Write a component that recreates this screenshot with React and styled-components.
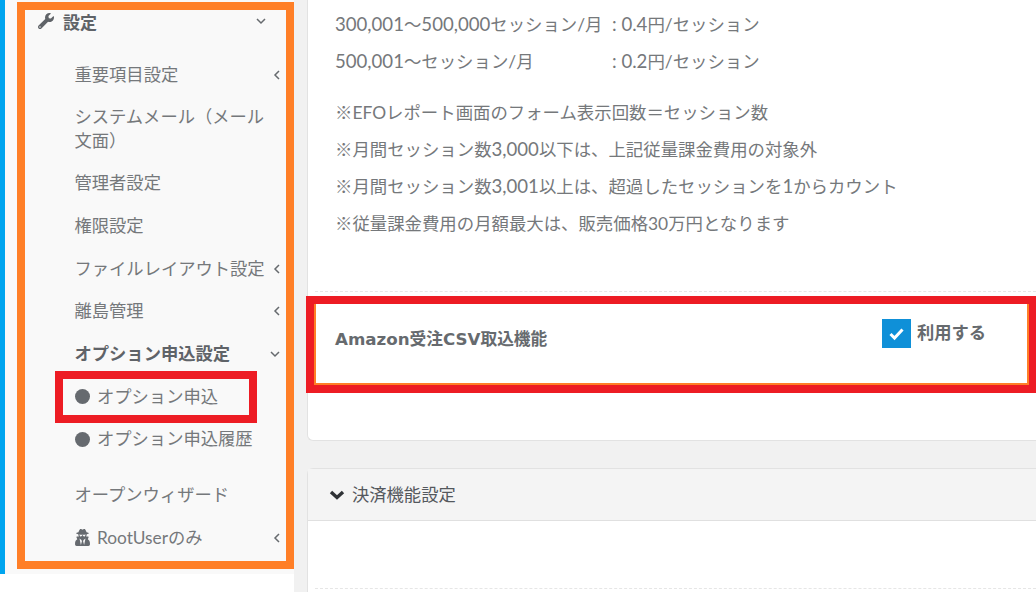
import React from 'react'
import styled, { createGlobalStyle } from 'styled-components'
import { FaWrench, FaUserSecret } from 'react-icons/fa'

const GlobalStyle = createGlobalStyle`
    html, body {
        margin: 0;
        padding: 0;
        height: 592px;
        overflow: hidden;
        background: #fff;
    }
    * {
        box-sizing: border-box;
    }
`

const Page = styled.div`
    display: flex;
    width: 1036px;
    height: 592px;
    overflow: hidden;
    font-family: Lato, "Noto Sans CJK JP", sans-serif;
    color: #6d7073;
    font-size: 17.4px;
`
const Sidebar = styled.aside`
    position: relative;
    flex: none;
    width: 294px;
    height: 574px;
    padding-left: 12px;
    background: #f9f9f9;
    border-left: 5px solid #00a5ef;
`
const OrangeFrame = styled.div`
    margin-top: 2px;
    width: 277px;
    height: 567px;
    border: 8px solid #ff7f27;
`
const SideHead = styled.div`
    display: flex;
    align-items: center;
    height: 26px;
    padding-left: 13px;
    margin-top: -2px;
    font-weight: 700;
    font-size: 17px;
    color: #5f6368;
    svg {
        margin-right: 9px;
    }
`
const Caret = styled.svg`
    flex: none;
    width: 10px;
    height: 10px;
    margin-left: auto;
    fill: none;
    stroke: #666a6e;
    stroke-width: 1.5;
    && {
        margin-right: ${p => p.$right}px;
    }
`
const Menu = styled.div`
    padding: 20px 0 0 49.5px;
`
const Item = styled.div`
    display: flex;
    align-items: center;
    padding: 9.35px 0;
    line-height: 24px;
    font-size: 17.3px;
    font-weight: ${p => (p.$bold ? 700 : 400)};
    color: ${p => (p.$bold ? '#5f6368' : '#75787b')};
    margin-bottom: ${p => p.$gap || 0}px;
`
const ItemText = styled.span`
    flex: 1;
    white-space: ${p => (p.$wrap ? 'normal' : 'nowrap')};
    padding-right: ${p => (p.$wrap ? '18px' : 0)};
`
const Dot = styled.i`
    flex: none;
    width: 15px;
    height: 15px;
    margin: 0 7px 0 .5px;
    border-radius: 50%;
    background: #666a6f;
`
const RootIcon = styled(FaUserSecret)`
    flex: none;
    width: 15px;
    height: 17px;
    margin: 0 7px 0 .5px;
    color: #666a6f;
`
const RedFrame = styled.div`
    position: absolute;
    left: 50px;
    top: 371px;
    width: 202px;
    height: 52px;
    border: 8px solid #ed1c24;
`
const Main = styled.main`
    flex: 1;
    min-width: 0;
    padding-left: 13px;
    background: #f1f1f1;
    height: 592px;
`
const TopCard = styled.section`
    position: relative;
    height: 441px;
    background: #fff;
    border: 1px solid #e2e2e2;
    border-top: 0;
    border-right: 0;
    border-bottom-left-radius: 6px;
`
const Notes = styled.div`
    height: 292px;
    margin-left: 7px;
    padding: 6px 0 0 20px;
    border-bottom: 1px dashed #e6e6e6;
`
const Line = styled.div`
    display: flex;
    height: 37px;
    line-height: 37px;
    white-space: pre;
    margin-bottom: ${p => p.$gap || 0}px;
    color: #75787b;
`
const Label = styled.span`
    width: 277px;
`
const Num = styled.span`
    font-size: 18.6px;
`
const Row = styled.div`
    position: relative;
    display: flex;
    justify-content: space-between;
    height: 94px;
    padding: 35px 0 0 27px;
`
const RowTitle = styled.div`
    font-family: "DejaVu Sans", "Noto Sans CJK JP", sans-serif;
    font-weight: 700;
    font-size: 16.7px;
    line-height: 24px;
    color: #666a6e;
`
const CheckArea = styled.label`
    display: flex;
    align-items: flex-start;
    width: 154px;
    margin-top: -8px;
    font-weight: 700;
    font-size: 17.3px;
    line-height: 28px;
    color: #666a6e;
`
const Checkbox = styled.span`
    display: flex;
    align-items: center;
    justify-content: center;
    flex: none;
    width: 29px;
    height: 29px;
    margin-right: 6px;
    background: #0f90d8;
`
const RowFrame = styled.div`
    position: absolute;
    left: -2px;
    right: 0;
    top: 4px;
    height: 97px;
    border: 8px solid #ed1c24;
    border-right-width: 7px;
    box-shadow: inset 2px -2px 0 #ff7f27, inset -2px 0 0 #ff7f27;
`
const BottomCard = styled.section`
    margin-top: 27px;
    height: 130px;
    background: #fff;
    border: 1px solid #e2e2e2;
    border-right: 0;
    border-radius: 6px 0 0 0;
`
const CardHead = styled.header`
    display: flex;
    align-items: center;
    height: 52px;
    padding: 0 0 3px 21px;
    background: #f4f4f4;
    border-bottom: 1px solid #e0e0e0;
    font-size: 17.3px;
    color: #54585d;
    svg {
        margin: 4px 7px 0 0;
    }
`
const CardBody = styled.div`
    height: 68px;
    border-bottom: 1px dashed #e6e6e6;
    margin-left: 7px;
`

const Chevron = ({ dir, right }) => (
    <Caret viewBox="0 0 10 10" $right={right}>
        {dir === 'down' ? <path d="M1 3l4 4 4-4" /> : <path d="M7 1L3 5l4 4" />}
    </Caret>
)

const App = () => {
    return (
        <Page>
            <GlobalStyle />
            <Sidebar>
                <OrangeFrame>
                    <SideHead>
                        <FaWrench size={16} />
                        設定
                        <Chevron dir="down" right={20} />
                    </SideHead>
                    <Menu>
                        <Item $gap={-1.5}>
                            <ItemText>重要項目設定</ItemText>
                            <Chevron right={4} />
                        </Item>
                        <Item>
                            <ItemText $wrap>システムメール（メール文面）</ItemText>
                        </Item>
                        <Item><ItemText>管理者設定</ItemText></Item>
                        <Item><ItemText>権限設定</ItemText></Item>
                        <Item>
                            <ItemText>ファイルレイアウト設定</ItemText>
                            <Chevron right={4} />
                        </Item>
                        <Item>
                            <ItemText>離島管理</ItemText>
                            <Chevron right={4} />
                        </Item>
                        <Item $bold>
                            <ItemText>オプション申込設定</ItemText>
                            <Chevron dir="down" right={6} />
                        </Item>
                        <Item><Dot /><ItemText>オプション申込</ItemText></Item>
                        <Item $gap={13}><Dot /><ItemText>オプション申込履歴</ItemText></Item>
                        <Item><ItemText>オープンウィザード</ItemText></Item>
                        <Item>
                            <RootIcon />
                            <ItemText>RootUserのみ</ItemText>
                            <Chevron right={4} />
                        </Item>
                    </Menu>
                </OrangeFrame>
                <RedFrame />
            </Sidebar>
            <Main>
                <TopCard>
                    <Notes>
                        <Line>
                            <Label><Num>300,001</Num>〜<Num>500,000</Num>セッション/月</Label>
                            <Num>: 0.4</Num>円/セッション
                        </Line>
                        <Line $gap={14}>
                            <Label><Num>500,001</Num>〜セッション/月</Label>
                            <Num>: 0.2</Num>円/セッション
                        </Line>
                        <Line>※EFOレポート画面のフォーム表示回数＝セッション数</Line>
                        <Line>※月間セッション数<Num>3,000</Num>以下は、上記従量課金費用の対象外</Line>
                        <Line>※月間セッション数<Num>3,001</Num>以上は、超過したセッションを<Num>1</Num>からカウント</Line>
                        <Line>※従量課金費用の月額最大は、販売価格30万円となります</Line>
                    </Notes>
                    <Row>
                        <RowTitle>Amazon受注CSV取込機能</RowTitle>
                        <CheckArea>
                            <Checkbox>
                                <svg width="17" height="14" viewBox="0 0 17 14" fill="none">
                                    <path d="M2.5 7l4 4 8-8.5" stroke="#fff" strokeWidth="3" />
                                </svg>
                            </Checkbox>
                            利用する
                        </CheckArea>
                        <RowFrame />
                    </Row>
                </TopCard>
                <BottomCard>
                    <CardHead>
                        <svg width="16" height="10" viewBox="0 0 16 10" fill="none">
                            <path d="M2 2l6 5.5L14 2" stroke="#2f3236" strokeWidth="3.4" />
                        </svg>
                        決済機能設定
                    </CardHead>
                    <CardBody />
                </BottomCard>
            </Main>
        </Page>
    )
}

export default App
